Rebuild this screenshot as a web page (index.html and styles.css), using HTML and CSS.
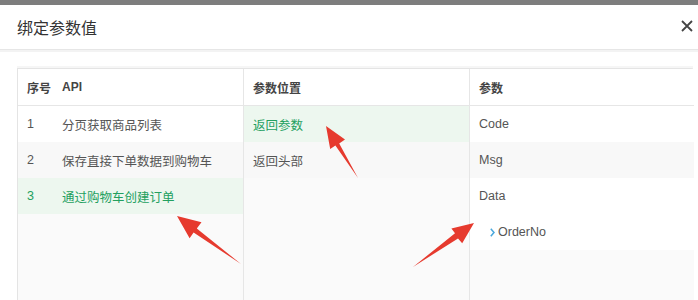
FILE: index.html
```html
<!DOCTYPE html>
<html lang="zh">
<head>
<meta charset="utf-8">
<link rel="stylesheet" href="styles.css">
</head>
<body>
<div class="topbar"></div>
<div class="modal">
  <div class="modal-header">
    <span class="title">绑定参数值</span>
    <svg class="close" width="12" height="12" viewBox="0 0 12 12"><path d="M1 1 L11 11 M11 1 L1 11"/></svg>
  </div>
  <div class="modal-body">
    <div class="panel">
      <div class="col col-api">
        <div class="head"><span class="num">序号</span><span>API</span></div>
        <div class="row"><span class="num">1</span><span>分页获取商品列表</span></div>
        <div class="row alt"><span class="num">2</span><span>保存直接下单数据到购物车</span></div>
        <div class="row active"><span class="num">3</span><span>通过购物车创建订单</span></div>
      </div>
      <div class="col col-pos">
        <div class="head">参数位置</div>
        <div class="row active">返回参数</div>
        <div class="row alt">返回头部</div>
      </div>
      <div class="col col-param">
        <div class="head">参数</div>
        <div class="row">Code</div>
        <div class="row alt">Msg</div>
        <div class="row">Data</div>
        <div class="row child"><svg class="chev" width="5" height="9" viewBox="0 0 5 9"><path d="M0.8 0.8 L4 4.5 L0.8 8.2"/></svg>OrderNo</div>
      </div>
    </div>
  </div>
</div>
<svg class="arrows" width="698" height="300" viewBox="0 0 698 300">
  <polygon points="241,264 196.8,228.6 201.5,222.2 177,216 189.6,238.2 193.6,232.6"/>
  <polygon points="358,178 339.2,143.4 345,139.4 326,126 330.2,149 335.4,145.6"/>
  <polygon points="413,267 458,238.4 462.2,243.2 474,223 451.4,228.4 455,233.2"/>
</svg>
</body>
</html>
```
FILE: styles.css
```css
html, body {
  margin: 0;
  padding: 0;
  background: #ffffff;
  width: 698px;
  height: 300px;
  overflow: hidden;
  font-family: "Liberation Sans", "Noto Sans CJK SC", sans-serif;
}
.topbar {
  height: 5px;
  background: #7d7d7d;
}
.modal-header {
  height: 44px;
  display: flex;
  align-items: center;
  justify-content: space-between;
  padding: 0 5px 0 17px;
  border-bottom: 1px solid #e6e6e6;
  box-shadow: 0 2px 0 #f3f3f3;
}
.title {
  font-family: "Noto Sans CJK SC", sans-serif;
  font-size: 16px;
  color: #333;
  margin-top: -1px;
}
.close {
  stroke: #444;
  stroke-width: 1.8;
  fill: none;
  margin-top: -2px;
}
.modal-body {
  padding: 18px 5px 0 17px;
}
.panel {
  display: grid;
  grid-template-columns: 226px 226px 224px;
  border: 1px solid #e4e4e4;
  border-right: 2px solid #ececec;
  height: 240px;
  box-shadow: 0 -2px 0 #f6f6f6;
}
.col {
  background: #fafafa;
  border-right: 1px solid #e6e6e6;
  font-size: 12.5px;
  color: #555;
  font-family: "Liberation Sans", "Noto Sans CJK SC", sans-serif;
}
.col:last-child { border-right: none; }
.head {
  height: 36px;
  display: flex;
  align-items: center;
  padding-left: 9px;
  background: #fff;
  border-bottom: 1px solid #e6e6e6;
  font-weight: bold;
  color: #444;
  font-size: 12px;
}
.row {
  height: 36px;
  display: flex;
  align-items: center;
  padding-left: 9px;
  background: #fff;
}
.row.alt { background: #f8f8f8; }
.row.active {
  background: #edf7ef;
  color: #23a05f;
}
.num {
  width: 35px;
  flex: none;
}
.row.child {
  padding-left: 20px;
  color: #555;
}
.chev {
  stroke: #4aa8dc;
  stroke-width: 1.5;
  fill: none;
  margin-right: 3px;
}
.arrows {
  position: absolute;
  left: 0;
  top: 0;
  pointer-events: none;
}
.arrows polygon {
  fill: #e63a2e;
}
```
